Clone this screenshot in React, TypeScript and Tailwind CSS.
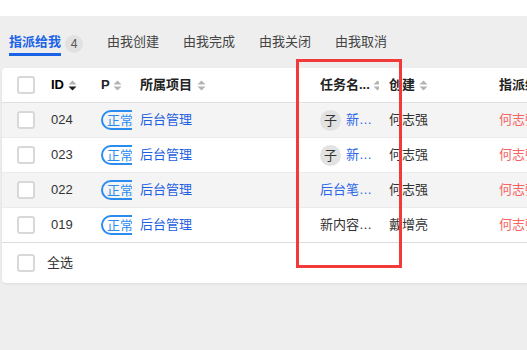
import type { FC } from 'react';

type Row = {
  id: string;
  child: boolean;
  task: string;
  taskTone: 'link' | 'plain';
  creator: string;
  assignee: string;
  striped: boolean;
};

const rows: Row[] = [
  { id: '024', child: true, task: '新建页面组件', taskTone: 'link', creator: '何志强', assignee: '何志强', striped: true },
  { id: '023', child: true, task: '新增接口联调', taskTone: 'link', creator: '何志强', assignee: '何志强', striped: false },
  { id: '022', child: false, task: '后台笔记整理', taskTone: 'link', creator: '何志强', assignee: '何志强', striped: true },
  { id: '019', child: false, task: '新内容发布流程', taskTone: 'plain', creator: '戴增亮', assignee: '何志强', striped: false },
];

const SortIcon: FC<{ active?: boolean }> = ({ active }) => (
  <svg width="9" height="11" viewBox="0 0 9 11" className="shrink-0">
    <path d="M4.5 0.5 L8.5 4.5 L0.5 4.5 Z" fill="#b3b3b3" />
    <path d="M0.5 6.5 L8.5 6.5 L4.5 10.5 Z" fill={active ? '#1f1f1f' : '#b3b3b3'} />
  </svg>
);

const Checkbox: FC = () => (
  <div className="w-[18px] h-[18px] border-2 border-[#d8d8d8] rounded-[3px] bg-white" />
);

const tabs = ['由我创建', '由我完成', '由我关闭', '由我取消'];

const App: FC = () => {
  return (
    <div
      className="relative w-[527px] h-[350px] overflow-hidden bg-[#eeeeee] text-[13px] text-[#333]"
      style={{ fontFamily: '"Liberation Sans", "Noto Sans CJK SC", sans-serif' }}
    >
      <div className="h-[16px] bg-white" />

      {/* tabs */}
      <div className="flex items-start gap-[24px] pl-[9px] pt-[16px] h-[52px]">
        <div className="flex items-start">
          <div className="flex flex-col">
            <span className="h-[20px] leading-[20px] font-semibold text-[#1a63e6]">指派给我</span>
            <div className="mt-[1px] h-[3px] bg-[#1a63e6]" />
          </div>
          <span className="ml-[4px] mt-[3px] w-[18px] h-[18px] rounded-full bg-[#e1e1e1] text-[12px] leading-[18px] text-center text-[#555]">
            4
          </span>
        </div>
        {tabs.map((t) => (
          <span key={t} className="h-[20px] leading-[20px] text-[#444]">
            {t}
          </span>
        ))}
      </div>

      {/* table card */}
      <div className="ml-[2px] w-[640px] bg-white rounded-[4px] shadow-[0_1px_3px_rgba(0,0,0,0.08)]">
        <div className="flex items-center h-[35px] border-b border-[#e0e0e0] font-semibold text-[#222]">
          <div className="w-[49px] pl-[15px]">
            <Checkbox />
          </div>
          <div className="w-[50px] flex items-center gap-[4px] font-bold text-black">
            ID <SortIcon active />
          </div>
          <div className="w-[39px] flex items-center gap-[3px]">
            P <SortIcon />
          </div>
          <div className="w-[180px] flex items-center gap-[5px]">
            所属项目 <SortIcon />
          </div>
          <div className="w-[69px]">
            <div className="w-[59px] flex items-center gap-[3px] overflow-hidden">
              <span className="shrink-0 whitespace-nowrap">任务名...</span>
              <SortIcon />
            </div>
          </div>
          <div className="w-[110px] flex items-center gap-[4px]">
            创建 <SortIcon />
          </div>
          <div className="flex-1 whitespace-nowrap">指派给</div>
        </div>

        {rows.map((r, i) => (
          <div
            key={r.id}
            className={`flex items-center h-[35px] border-b ${
              i === rows.length - 1 ? 'border-[#dcdcdc]' : 'border-[#ebebeb]'
            } ${r.striped ? 'bg-[#f4f4f4]' : 'bg-white'}`}
          >
            <div className="w-[49px] pl-[15px]">
              <Checkbox />
            </div>
            <div className="w-[50px]">{r.id}</div>
            <div className="w-[39px]">
              <div className="w-[31px] overflow-hidden">
                <span className="inline-flex items-center h-[20px] pl-[4px] pr-[8px] border-2 border-[#2b8cf0] rounded-full text-[#2b8cf0] whitespace-nowrap leading-none">
                  正常
                </span>
              </div>
            </div>
            <div className="w-[180px] text-[#1f5fe0]">后台管理</div>
            <div className="w-[69px]">
              <div className="w-[56px] flex items-center gap-[5px]">
                {r.child && (
                  <span className="shrink-0 w-[21px] h-[21px] rounded-full bg-[#e2e2e2] text-center leading-[21px] text-[#333]">
                    子
                  </span>
                )}
                <span className={`truncate ${r.taskTone === 'link' ? 'text-[#2a66e6]' : 'text-[#333]'}`}>
                  {r.task}
                </span>
              </div>
            </div>
            <div className="w-[110px]">{r.creator}</div>
            <div className="flex-1 text-[#f56464] whitespace-nowrap">{r.assignee}</div>
          </div>
        ))}

        <div className="flex items-center h-[40px]">
          <div className="w-[45px] pl-[15px]">
            <Checkbox />
          </div>
          <span>全选</span>
        </div>
      </div>

      {/* annotation box */}
      <div className="absolute left-[296px] top-[59px] w-[106px] h-[209px] border-[3px] border-[#f23a3a]" />
    </div>
  );
};

export default App;
